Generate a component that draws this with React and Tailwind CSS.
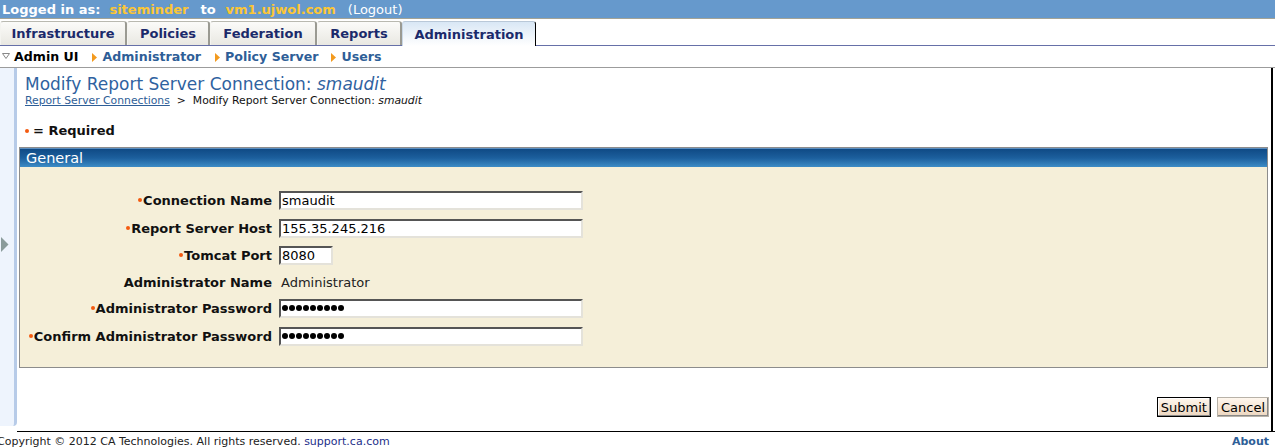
import React from "react";

const Arrow = () => (
  <svg width="5" height="9" viewBox="0 0 5 9" className="inline-block mr-[5px] mb-[1px]">
    <path d="M0 0 L5 4.5 L0 9 Z" fill="#f39a1e" />
  </svg>
);

const Dot = () => (
  <span className="inline-block w-[4px] h-[4px] rounded-full bg-[#f45a10] mr-[1px] mb-[3px] align-middle" />
);

function Row({ label, req, children, mt }) {
  return (
    <div className={`flex items-center h-[20px] ${mt}`}>
      <div className="w-[252px] text-right font-bold text-[13px] text-[#111] whitespace-nowrap">
        {req && <Dot />}
        {label}
      </div>
      <div className="ml-[7px] flex items-center">{children}</div>
    </div>
  );
}

function Field({ value, w = "w-[304px]" }) {
  return (
    <div
      className={`${w} h-[19px] bg-white border-2 border-t-[#555] border-l-[#555] border-r-[#e4e2da] border-b-[#e4e2da] pl-[1px] text-[13px] text-black flex items-center whitespace-nowrap`}
    >
      {value}
    </div>
  );
}

function Pass() {
  return (
    <div className="w-[304px] h-[19px] bg-white border-2 border-t-[#555] border-l-[#555] border-r-[#e4e2da] border-b-[#e4e2da] pl-[1px] flex items-center gap-[1px]">
      {[0, 1, 2, 3, 4, 5, 6, 7, 8].map((i) => (
        <span key={i} className="inline-block w-[6px] h-[6px] rounded-full bg-black" />
      ))}
    </div>
  );
}

export default function App() {
  return (
    <div className="w-[1275px] h-[448px] overflow-hidden bg-white font-['DejaVu_Sans',sans-serif] text-[13px] leading-none">
      {/* top bar */}
      <div className="h-[19px] bg-[#6699cc] border-b border-[#a3a396] flex items-center pl-[2px] text-white text-[13px] whitespace-nowrap">
        <span className="font-bold">Logged in as:</span>
        <span className="font-bold text-[#fcc635] ml-[9px]">siteminder</span>
        <span className="font-bold ml-[12px]">to</span>
        <span className="font-bold text-[#fcc635] ml-[10px]">vm1.ujwol.com</span>
        <span className="ml-[12px]">(Logout)</span>
      </div>
      {/* tabs */}
      <div className="h-[27px] flex items-end border-b border-[#6670a8] pr-[2px]">
        {[
          ["Infrastructure", "w-[127px]"],
          ["Policies", "w-[83px]"],
          ["Federation", "w-[107px]"],
          ["Reports", "w-[85px]"],
        ].map(([t, w]) => (
          <div
            key={t}
            className={`${w} h-[24px] flex items-center justify-center border-t border-r-2 border-l border-t-[#b9b9b0] border-r-[#9a9a92] border-l-[#f4f4f0] rounded-t-[3px] bg-gradient-to-b from-[#fbfbf9] to-[#e9e8e2] font-bold text-[13px] text-[#1b2a6b]`}
          >
            {t}
          </div>
        ))}
        <div className="w-[134px] h-[25px] flex items-center justify-center border-t border-r border-l border-t-[#b9c8d8] border-l-[#c9d7e6] border-r-black rounded-t-[3px] bg-gradient-to-b from-[#d9e7f5] to-white font-bold text-[13px] text-[#1b2a6b] -mb-px">
          Administration
        </div>
        <div className="flex-1" />
      </div>
      {/* sub nav */}
      <div className="h-[22px] pt-[2px] flex items-center border-b border-[#9c9c9c] whitespace-nowrap font-bold text-[12.6px]">
        <svg width="8" height="6" viewBox="0 0 8 6" className="ml-[2px] mr-[4px] mb-[4px]">
          <path d="M0.5 0.5 L7.5 0.5 L4 5.5 Z" fill="none" stroke="#888" strokeWidth="1" />
        </svg>
        <span className="text-black">Admin UI</span>
        <span className="ml-[14px] text-[#2e5e97]"><Arrow />Administrator</span>
        <span className="ml-[14px] text-[#2e5e97]"><Arrow />Policy Server</span>
        <span className="ml-[13px] text-[#2e5e97]"><Arrow />Users</span>
      </div>
      {/* main */}
      <div className="flex h-[364px]">
        {/* sidebar */}
        <div className="w-[17px] flex flex-col">
          <div className="h-[358px] w-[17px] bg-[#eef4fd] border-r-[3px] border-r-[#b7cbe8] rounded-br-[4px] flex items-center">
            <svg width="8" height="15" viewBox="0 0 8 15" className="ml-[1px] mb-[6px]">
              <path d="M0 0 L7.5 7.5 L0 15 Z" fill="#8a9b9b" />
            </svg>
          </div>
        </div>
        {/* content */}
        <div className="flex-1 flex flex-col border-r-2 border-black border-b">
          <div className="pl-[8px] pt-[5px]">
            <div className="text-[17px] text-[#2f62a0] leading-[22px] whitespace-nowrap">
              Modify Report Server Connection: <i>smaudit</i>
            </div>
            <div className="text-[10.8px] h-[11px] mt-[1px] whitespace-nowrap text-[#111]">
              <span className="text-[#2e5e97] underline">Report Server Connections</span>
              <span className="mx-[7px]">&gt;</span>
              Modify Report Server Connection: <i>smaudit</i>
            </div>
            <div className="mt-[17px] font-bold text-[13px] text-[#111] flex items-center">
              <span className="inline-block w-[4px] h-[4px] rounded-full bg-[#f45a10] mr-[4px]" />= Required
            </div>
          </div>
          {/* panel */}
          <div className="ml-[2px] mr-[3px] mt-[10px] border border-[#8c8c8c] bg-[#f5efd9]">
            <div className="h-[19px] bg-gradient-to-b from-[#0f4a85] via-[#1c5f9d] to-[#3d8cc6] border-t border-[#5d8fc0] text-white text-[14.5px] flex items-center pl-[6px]">
              General
            </div>
            <div className="pt-[23px] pb-[21px] flex flex-col">
              <Row label="Connection Name" req>
                <Field value="smaudit" />
              </Row>
              <Row label="Report Server Host" req mt="mt-[8px]">
                <Field value="155.35.245.216" />
              </Row>
              <Row label="Tomcat Port" req mt="mt-[7px]">
                <Field value="8080" w="w-[54px]" />
              </Row>
              <Row label="Administrator Name" mt="mt-[7px]">
                <span className="text-[13px] text-[#222] ml-[2px]">Administrator</span>
              </Row>
              <Row label="Administrator Password" req mt="mt-[6px]">
                <Pass />
              </Row>
              <Row label="Confirm Administrator Password" req mt="mt-[8px]">
                <Pass />
              </Row>
            </div>
          </div>
          <div className="flex-1 flex items-end justify-end pb-[14px] pr-[2px] gap-[6px]">
            <button className="h-[20px] px-[3px] border border-black bg-gradient-to-b from-[#fff7ee] to-[#ecd6bf] text-[13px] text-black shadow-[inset_-1px_-1px_0_#888,inset_1px_1px_0_#fff]">
              Submit
            </button>
            <button className="h-[20px] px-[3px] border border-[#b8b2a8] bg-gradient-to-b from-[#fff7ee] to-[#ecd6bf] text-[13px] text-black shadow-[inset_-1px_-1px_0_#888]">
              Cancel
            </button>
          </div>
        </div>
        <div className="w-[2px] border-b border-black" />
      </div>
      {/* footer */}
      <div className="h-[16px] pt-[2px] flex items-center justify-between text-[11px] whitespace-nowrap">
        <span className="-ml-[3px] text-[#222]">
          Copyright © 2012 CA Technologies. All rights reserved. <span className="text-[#1d2f8a]">support.ca.com</span>
        </span>
        <span className="font-bold text-[#2e5e97] mr-[6px]">About</span>
      </div>
    </div>
  );
}
